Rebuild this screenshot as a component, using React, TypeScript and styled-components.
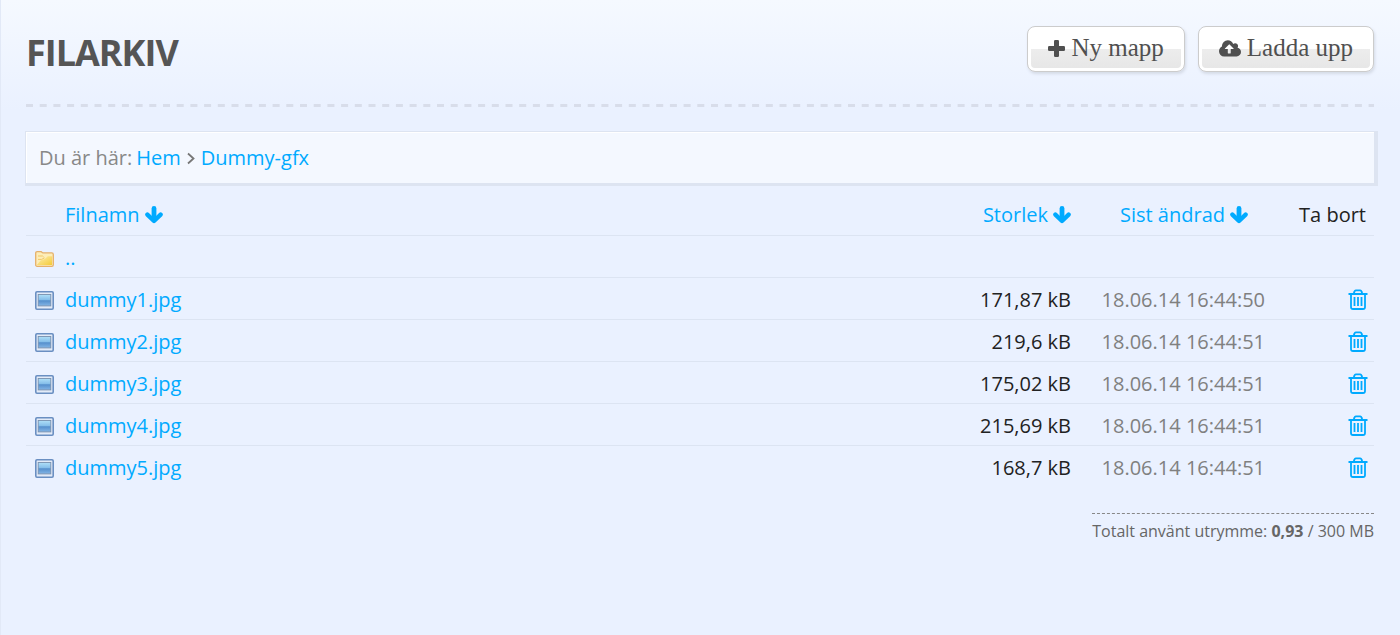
import React from "react";
import styled, { createGlobalStyle } from "styled-components";

const GlobalStyle = createGlobalStyle`
  * { box-sizing: border-box; }
  body {
    margin: 0;
    font-family: "Open Sans", "Noto Sans", sans-serif;
    font-size: 20px;
    line-height: 28px;
    color: #222;
    background: #eaf1ff;
  }
`;

const Page = styled.main`
  min-height: 100vh;
  padding: 26px 26px 40px 25px;
  border-left: 1px solid #e2e9f7;
  background: linear-gradient(#f5f9ff, #eaf1ff 110px);
`;

const Header = styled.header`
  display: flex;
  justify-content: space-between;
  align-items: flex-start;
  height: 78px;
`;

const Title = styled.h1`
  margin: 0;
  font-size: 36px;
  line-height: 54px;
  letter-spacing: -1px;
  color: #555;
`;

const Actions = styled.div`
  display: flex;
  gap: 13px;
`;

const ActionButton = styled.button`
  display: flex;
  align-items: center;
  gap: 6px;
  height: 46px;
  padding: 0 20px 2px;
  border: 1px solid #ccc;
  border-radius: 8px;
  background: linear-gradient(#fff 49%, #ededed 49%, #e6e6e6);
  box-shadow: inset 0 0 0 3px #fff, 1px 2px 3px #d5dbe7;
  color: #505050;
  font-family: "Liberation Serif", serif;
  font-size: 25px;
  line-height: 28px;
`;

const Divider = styled.svg`
  display: block;
  width: 100%;
  height: 3px;
`;

const Crumbs = styled.nav`
  display: flex;
  align-items: center;
  height: 55px;
  margin: 24px -4px 7px -1px;
  padding: 0 13px;
  border: solid #dde4f1;
  border-width: 1px 4px 3px 1px;
  background: #f4f8ff;
  box-shadow: inset 1px 1px 0 #fff;
  color: #888;
`;

const CrumbLabel = styled.span`
  margin-right: 4px;
`;

const Link = styled.a`
  color: #0af;
  text-decoration: none;
`;

const SortLink = styled(Link)`
  display: inline-flex;
  align-items: center;
  gap: 5px;
`;

const Files = styled.table`
  width: 100%;
  border-collapse: collapse;
`;

const Row = styled.tr`
  height: 42px;
  tbody > & {
    border-top: 1px solid #dce4f2;
  }
`;

const Cell = styled.td<{ $align?: string; $muted?: boolean; $width?: number; $end?: number }>`
  padding: 3px ${(p) => p.$end ?? 8}px 0 0;
  width: ${(p) => (p.$width ? `${p.$width}px` : "auto")};
  text-align: ${(p) => p.$align ?? "left"};
  color: ${(p) => (p.$muted ? "#808080" : "#222")};
  font-weight: 400;
  white-space: nowrap;
`;

const IconCell = styled(Cell)`
  padding: 5px 0 0 9px;
`;

const IconButton = styled.button`
  display: block;
  margin-left: auto;
  padding: 0;
  border: 0;
  background: none;
  color: #0af;
`;

const Glyph = styled.svg`
  display: block;
`;

const Usage = styled.footer`
  width: fit-content;
  margin: 26px 0 0 auto;
  padding-top: 5px;
  border-top: 1px dashed #888;
  font-size: 16px;
  line-height: 24px;
  color: #666;
`;

const Plus = () => (
  <Glyph width="17" height="17" viewBox="0 0 17 17" fill="currentColor" aria-hidden="true">
    <rect x="6" width="5" height="17" rx="1.2" />
    <rect y="6" width="17" height="5" rx="1.2" />
  </Glyph>
);

const CloudUpload = () => (
  <Glyph width="22" height="17" viewBox="0 112 1920 1408" fill="currentColor" fillRule="evenodd" aria-hidden="true">
    <path d="M1280 832q0-14-9-23l-352-352q-9-9-23-9t-23 9l-351 351q-10 12-10 24 0 14 9 23t23 9h224v352q0 13 9.5 22.5t22.5 9.5h192q13 0 22.5-9.5t9.5-22.5v-352h224q13 0 22.5-9.5t9.5-22.5zm640 288q0 159-112.5 271.5t-271.5 112.5h-1088q-185 0-316.5-131.5t-131.5-316.5q0-130 70-240t188-165q-2-30-2-43 0-212 150-362t362-150q156 0 285.5 87t188.5 231q71-62 166-62 106 0 181 75t75 181q0 76-41 138 130 31 213.5 135.5t83.5 238.5z" />
  </Glyph>
);

const ChevronRight = () => (
  <Glyph width="20" height="14" viewBox="0 0 20 14" fill="none" stroke="#777" strokeWidth="1.8" aria-hidden="true">
    <path d="M7 2.5 12.5 7.5 7 12.5" />
  </Glyph>
);

const ArrowDown = () => (
  <Glyph width="18" height="18" viewBox="0 0 18 18" fill="none" stroke="currentColor" aria-hidden="true">
    <path d="M9 2.4v11" strokeWidth="4.8" strokeLinecap="round" />
    <path d="M2.4 8.6 9 15l6.6-6.4" strokeWidth="4.4" strokeLinecap="round" strokeLinejoin="round" />
  </Glyph>
);

const Trash = () => (
  <Glyph width="20" height="21" viewBox="0 0 20 21" fill="none" stroke="currentColor" strokeWidth="1.8" aria-hidden="true">
    <path d="M.5 5h19M5.7 4.8l.8-2.4q.3-1.1 1.3-1.1h4.4q1 0 1.3 1.1l.8 2.4M3 5v12.9q0 2.1 2 2.1h10q2 0 2-2.1V5" />
    <path d="M6.5 8v9M10 8v9M13.5 8v9" />
  </Glyph>
);

const Folder = () => (
  <Glyph width="19" height="16" viewBox="0 0 19 16" aria-hidden="true">
    <defs>
      <linearGradient id="folder" x1="0" y1="0" x2="1" y2="1">
        <stop offset="0" stopColor="#fdeeb4" />
        <stop offset="1" stopColor="#f4cb38" />
      </linearGradient>
    </defs>
    <path d="M.7 2.2Q.7.7 2.2.7h4l1.6 1.2h9q1.5 0 1.5 1.5v10.3q0 1.6-1.5 1.6H2.2q-1.5 0-1.5-1.6z" fill="#fdedb8" stroke="#e5b06a" strokeWidth="1.3" />
    <path d="M2 13.8 5.8 9.2l4-1.2 3-2.8H17v8.8H2z" fill="url(#folder)" />
    <path d="M3 5h4.5l1.2 1M3 8.4h3.6l3-1.6" fill="none" stroke="#f1c866" />
  </Glyph>
);

const Picture = () => (
  <Glyph width="19" height="19" viewBox="0 0 19 19" aria-hidden="true">
    <defs>
      <linearGradient id="picture" x1="0" y1="0" x2="0" y2="1">
        <stop offset="0" stopColor="#b0e0f8" />
        <stop offset=".45" stopColor="#86bfea" />
        <stop offset=".55" stopColor="#5690cd" />
        <stop offset="1" stopColor="#84b6e6" />
      </linearGradient>
    </defs>
    <rect x=".8" y=".8" width="17.4" height="17.4" rx="1.2" fill="#e3ebf8" stroke="#6a8fc2" strokeWidth="1.6" />
    <rect x="3.2" y="3.5" width="12.6" height="11.4" fill="url(#picture)" stroke="#7890ae" strokeWidth=".9" />
  </Glyph>
);

const files = [
  { name: "dummy1.jpg", size: "171,87 kB", changed: "18.06.14 16:44:50" },
  { name: "dummy2.jpg", size: "219,6 kB", changed: "18.06.14 16:44:51" },
  { name: "dummy3.jpg", size: "175,02 kB", changed: "18.06.14 16:44:51" },
  { name: "dummy4.jpg", size: "215,69 kB", changed: "18.06.14 16:44:51" },
  { name: "dummy5.jpg", size: "168,7 kB", changed: "18.06.14 16:44:51" },
];

export default function App() {
  return (
    <>
      <GlobalStyle />
      <Page>
        <Header>
          <Title>FILARKIV</Title>
          <Actions>
            <ActionButton type="button">
              <Plus />
              Ny mapp
            </ActionButton>
            <ActionButton type="button">
              <CloudUpload />
              Ladda upp
            </ActionButton>
          </Actions>
        </Header>
        <Divider aria-hidden="true">
          <line x1="0" y1="1.5" x2="100%" y2="1.5" stroke="#d8ddea" strokeWidth="3" strokeDasharray="7 6.7" />
        </Divider>
        <Crumbs aria-label="Sökväg">
          <CrumbLabel>Du är här:</CrumbLabel>
          <Link href="#hem">Hem</Link>
          <ChevronRight />
          <Link href="#dummy-gfx">Dummy-gfx</Link>
        </Crumbs>
        <Files>
          <thead>
            <Row>
              <Cell $width={39} />
              <Cell as="th"><SortLink href="#filnamn">Filnamn <ArrowDown /></SortLink></Cell>
              <Cell as="th" $align="right" $width={160}><SortLink href="#storlek">Storlek <ArrowDown /></SortLink></Cell>
              <Cell as="th" $align="right" $width={194} $end={25}><SortLink href="#andrad">Sist ändrad <ArrowDown /></SortLink></Cell>
              <Cell as="th" $align="right" $width={101}>Ta bort</Cell>
            </Row>
          </thead>
          <tbody>
            <Row>
              <IconCell><Folder /></IconCell>
              <Cell colSpan={4}><Link href="#upp">..</Link></Cell>
            </Row>
            {files.map((file) => (
              <Row key={file.name}>
                <IconCell><Picture /></IconCell>
                <Cell><Link href={`#${file.name}`}>{file.name}</Link></Cell>
                <Cell $align="right">{file.size}</Cell>
                <Cell $align="right" $muted>{file.changed}</Cell>
                <Cell $end={6}>
                  <IconButton type="button" aria-label={`Ta bort ${file.name}`}><Trash /></IconButton>
                </Cell>
              </Row>
            ))}
          </tbody>
        </Files>
        <Usage>Totalt använt utrymme: <b>0,93</b> / 300 MB</Usage>
      </Page>
    </>
  );
}
